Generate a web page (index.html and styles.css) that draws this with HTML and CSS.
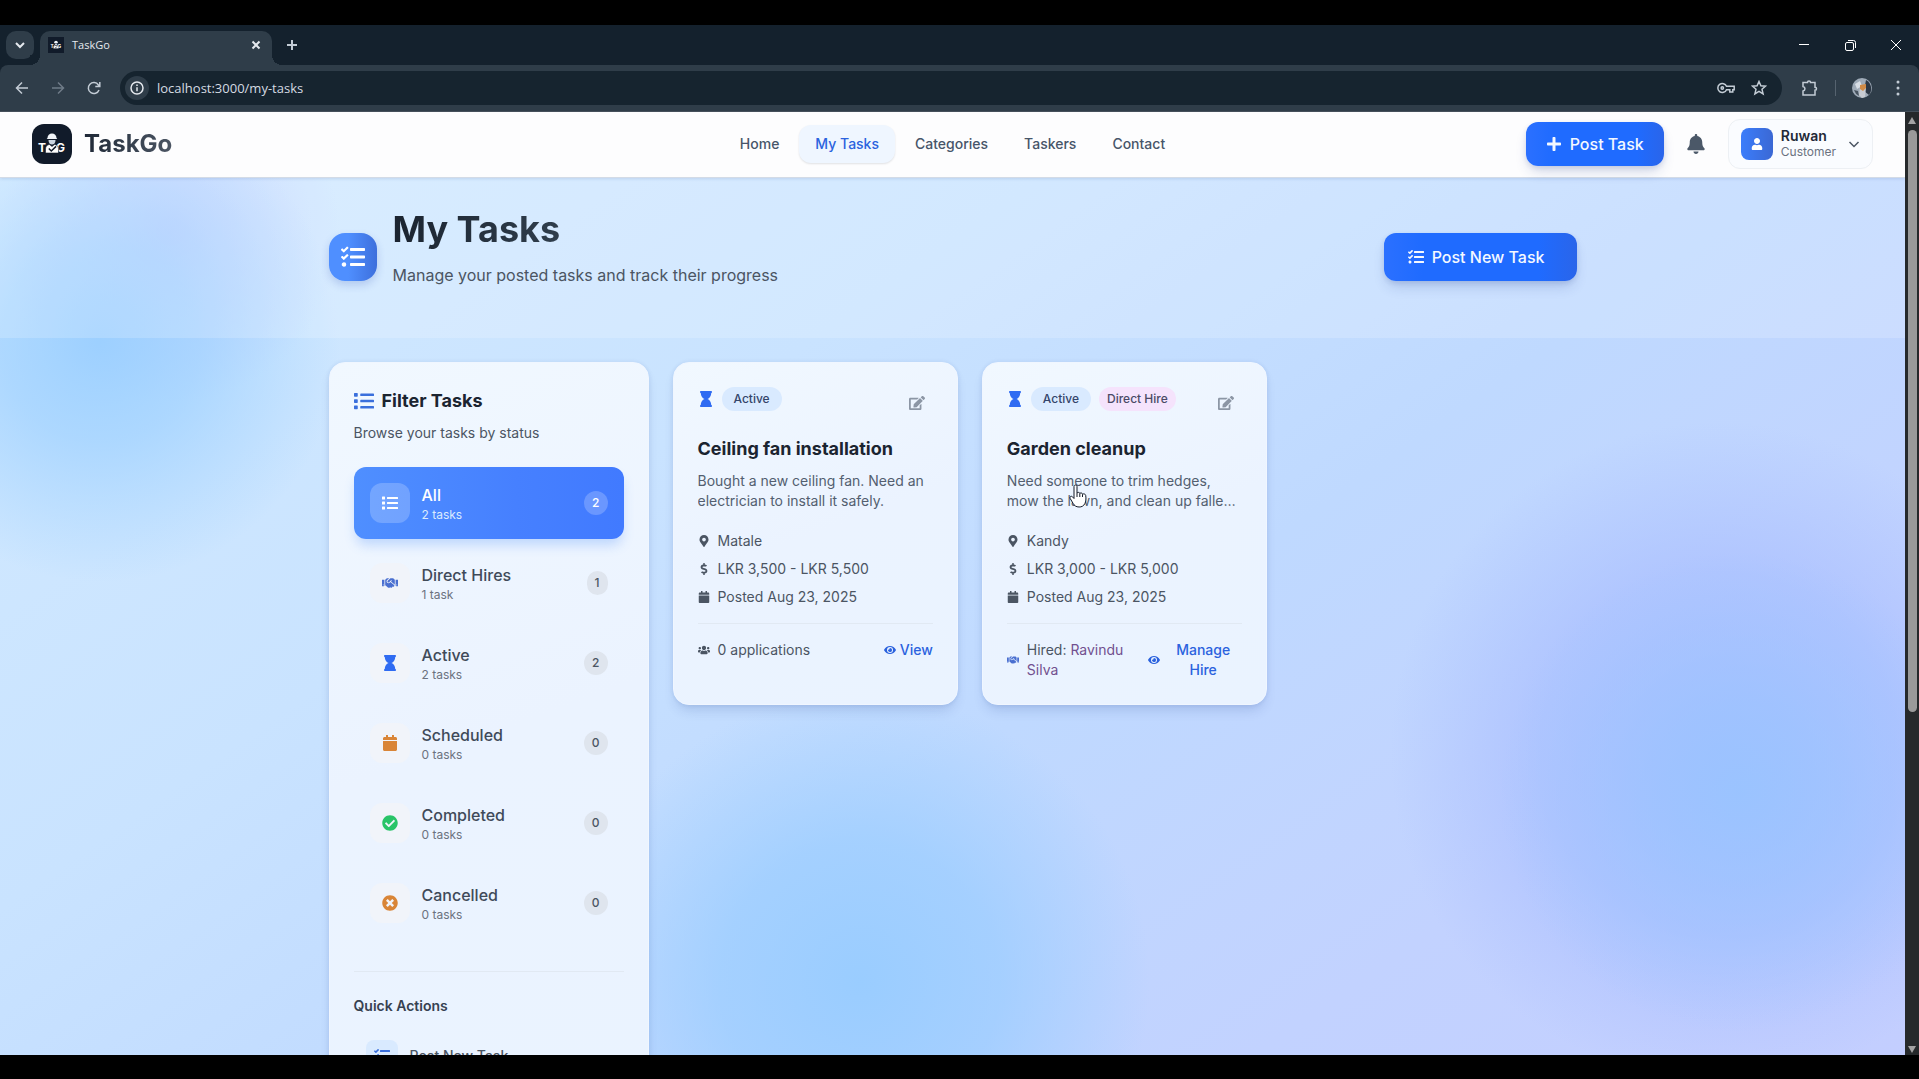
FILE: index.html
```html
<!DOCTYPE html>
<html lang="en">
<head>
<meta charset="utf-8">
<meta name="viewport" content="width=device-width, initial-scale=1">
<title>TaskGo</title>
<link rel="stylesheet" href="styles.css">
</head>
<body>
<svg class="sprite" aria-hidden="true">
  <symbol id="tasks" viewBox="0 0 512 512"><path d="M139.61 35.5a12 12 0 0 0-17 0L58.93 98.81l-22.7-22.12a12 12 0 0 0-17 0L3.53 92.41a12 12 0 0 0 0 17l47.59 47.4a12.78 12.78 0 0 0 17.61 0l15.59-15.62L156.52 69a12.09 12.09 0 0 0 .09-17zm0 159.19a12 12 0 0 0-17 0l-63.68 63.72-22.7-22.1a12 12 0 0 0-17 0L3.53 252a12 12 0 0 0 0 17L51 316.5a12.77 12.77 0 0 0 17.6 0l15.7-15.69 72.2-72.22a12 12 0 0 0 .09-16.9zM64 368c-26.49 0-48.59 21.5-48.59 48S37.53 464 64 464a48 48 0 0 0 0-96zm432 16H208a16 16 0 0 0-16 16v32a16 16 0 0 0 16 16h288a16 16 0 0 0 16-16v-32a16 16 0 0 0-16-16zm0-320H208a16 16 0 0 0-16 16v32a16 16 0 0 0 16 16h288a16 16 0 0 0 16-16V80a16 16 0 0 0-16-16zm0 160H208a16 16 0 0 0-16 16v32a16 16 0 0 0 16 16h288a16 16 0 0 0 16-16v-32a16 16 0 0 0-16-16z"/></symbol>
  <symbol id="list" viewBox="0 0 512 512"><path d="M80 368H16a16 16 0 0 0-16 16v64a16 16 0 0 0 16 16h64a16 16 0 0 0 16-16v-64a16 16 0 0 0-16-16zm0-320H16A16 16 0 0 0 0 64v64a16 16 0 0 0 16 16h64a16 16 0 0 0 16-16V64a16 16 0 0 0-16-16zm0 160H16a16 16 0 0 0-16 16v64a16 16 0 0 0 16 16h64a16 16 0 0 0 16-16v-64a16 16 0 0 0-16-16zm416 176H176a16 16 0 0 0-16 16v32a16 16 0 0 0 16 16h320a16 16 0 0 0 16-16v-32a16 16 0 0 0-16-16zm0-320H176a16 16 0 0 0-16 16v32a16 16 0 0 0 16 16h320a16 16 0 0 0 16-16V80a16 16 0 0 0-16-16zm0 160H176a16 16 0 0 0-16 16v32a16 16 0 0 0 16 16h320a16 16 0 0 0 16-16v-32a16 16 0 0 0-16-16z"/></symbol>
  <symbol id="hourglass" viewBox="0 0 384 512"><path d="M360 64c13.255 0 24-10.745 24-24V24c0-13.255-10.745-24-24-24H24C10.745 0 0 10.745 0 24v16c0 13.255 10.745 24 24 24 0 90.965 51.016 167.734 120.842 192C75.016 280.266 24 357.035 24 448c-13.255 0-24 10.745-24 24v16c0 13.255 10.745 24 24 24h336c13.255 0 24-10.745 24-24v-16c0-13.255-10.745-24-24-24 0-90.965-51.016-167.734-120.842-192C308.984 231.734 360 154.965 360 64z"/></symbol>
  <symbol id="calendar" viewBox="0 0 448 512"><path d="M12 192h424c6.6 0 12 5.4 12 12v260c0 26.5-21.5 48-48 48H48c-26.5 0-48-21.5-48-48V204c0-6.6 5.4-12 12-12zm436-44v-36c0-26.5-21.5-48-48-48h-48V12c0-6.6-5.4-12-12-12h-40c-6.6 0-12 5.4-12 12v52H160V12c0-6.6-5.4-12-12-12h-40c-6.6 0-12 5.4-12 12v52H48C21.5 64 0 85.5 0 112v36c0 6.6 5.4 12 12 12h424c6.6 0 12-5.4 12-12z"/></symbol>
  <symbol id="check" viewBox="0 0 512 512"><path d="M504 256c0 136.967-111.033 248-248 248S8 392.967 8 256 119.033 8 256 8s248 111.033 248 248zM227.314 387.314l184-184c6.248-6.248 6.248-16.379 0-22.627l-22.627-22.627c-6.248-6.249-16.379-6.249-22.628 0L216 308.118l-70.059-70.059c-6.248-6.248-16.379-6.248-22.628 0l-22.627 22.627c-6.248 6.248-6.248 16.379 0 22.627l104 104c6.249 6.249 16.379 6.249 22.628.001z"/></symbol>
  <symbol id="times" viewBox="0 0 512 512"><path d="M256 8C119 8 8 119 8 256s111 248 248 248 248-111 248-248S393 8 256 8zm121.6 313.1c4.7 4.7 4.7 12.3 0 17L338 377.6c-4.7 4.7-12.3 4.7-17 0L256 312l-65.1 65.6c-4.7 4.7-12.3 4.7-17 0L134.4 338c-4.7-4.7-4.7-12.3 0-17l65.6-65-65.6-65.1c-4.7-4.7-4.7-12.3 0-17l39.6-39.6c4.7-4.7 12.3-4.7 17 0l65 65.7 65.1-65.6c4.7-4.7 12.3-4.7 17 0l39.6 39.6c4.7 4.7 4.7 12.3 0 17L312 256l65.6 65.1z"/></symbol>
  <symbol id="edit" viewBox="0 0 576 512"><path d="M402.6 83.2l90.2 90.2c3.8 3.8 3.8 10 0 13.8L274.4 405.6l-92.8 10.3c-12.4 1.4-22.9-9.1-21.5-21.5l10.3-92.8L388.8 83.2c3.8-3.8 10-3.8 13.8 0zm162-22.9l-48.8-48.8c-15.2-15.2-39.9-15.2-55.2 0l-35.4 35.4c-3.8 3.8-3.8 10 0 13.8l90.2 90.2c3.8 3.8 10 3.8 13.8 0l35.4-35.4c15.2-15.3 15.2-40 0-55.2zM384 346.2V448H64V128h229.8c3.2 0 6.2-1.3 8.5-3.5l40-40c7.6-7.6 2.2-20.5-8.5-20.5H48C21.5 64 0 85.5 0 112v352c0 26.5 21.5 48 48 48h352c26.5 0 48-21.5 48-48V306.2c0-10.7-12.9-16-20.5-8.5l-40 40c-2.2 2.3-3.5 5.3-3.5 8.5z"/></symbol>
  <symbol id="pin" viewBox="0 0 384 512"><path d="M172.268 501.67C26.97 291.031 0 269.413 0 192 0 85.961 85.961 0 192 0s192 85.961 192 192c0 77.413-26.97 99.031-172.268 309.67-9.535 13.774-29.93 13.773-39.464 0zM192 272c44.183 0 80-35.817 80-80s-35.817-80-80-80-80 35.817-80 80 35.817 80 80 80z"/></symbol>
  <symbol id="dollar" viewBox="0 0 288 512"><path d="M209.2 233.4l-108-31.6C88.7 198.2 80 186.5 80 173.5c0-16.3 13.2-29.5 29.5-29.5h66.3c12.2 0 24.2 3.7 34.2 10.5 6.1 4.1 14.3 3.1 19.5-2l34.8-34c7.1-6.9 6.1-18.4-1.8-24.5C238 74.8 207.4 64.1 176 64V16c0-8.8-7.2-16-16-16h-32c-8.8 0-16 7.2-16 16v48h-2.5C45.8 64-5.4 118.7.5 183.6c4.2 46.1 39.4 83.6 83.8 96.6l102.5 30c12.5 3.7 21.2 15.3 21.2 28.3 0 16.3-13.2 29.5-29.5 29.5h-66.3C100 368 88 364.3 78 357.5c-6.1-4.1-14.3-3.1-19.5 2l-34.8 34c-7.1 6.9-6.1 18.4 1.8 24.5 24.5 19.2 55.1 29.9 86.5 30v48c0 8.8 7.2 16 16 16h32c8.8 0 16-7.2 16-16v-48.2c46.6-.9 90.3-28.6 105.7-72.7 21.5-61.6-14.6-124.8-72.5-141.7z"/></symbol>
  <symbol id="users" viewBox="0 0 640 512"><path d="M96 224c35.3 0 64-28.7 64-64s-28.7-64-64-64-64 28.7-64 64 28.7 64 64 64zm448 0c35.3 0 64-28.7 64-64s-28.7-64-64-64-64 28.7-64 64 28.7 64 64 64zm32 32h-64c-17.6 0-33.5 7.1-45.1 18.6 40.3 22.1 68.9 62 75.1 109.4h66c17.7 0 32-14.3 32-32v-32c0-35.3-28.7-64-64-64zm-256 0c61.9 0 112-50.1 112-112S381.9 32 320 32 208 82.1 208 144s50.1 112 112 112zm76.8 32h-8.3c-20.8 10-43.9 16-68.5 16s-47.6-6-68.5-16h-8.3C179.6 288 128 339.6 128 403.2V432c0 26.5 21.5 48 48 48h288c26.5 0 48-21.5 48-48v-28.8c0-63.6-51.6-115.2-115.2-115.2zm-223.7-13.4C161.5 263.1 145.6 256 128 256H64c-35.3 0-64 28.7-64 64v32c0 17.7 14.3 32 32 32h65.9c6.3-47.4 34.9-87.3 75.2-109.4z"/></symbol>
  <symbol id="eye" viewBox="0 0 576 512"><path d="M572.52 241.4C518.29 135.59 410.93 64 288 64S57.68 135.64 3.48 241.41a32.35 32.35 0 0 0 0 29.19C57.71 376.41 165.07 448 288 448s230.32-71.64 284.52-177.41a32.35 32.35 0 0 0 0-29.19zM288 400a144 144 0 1 1 144-144 143.93 143.93 0 0 1-144 144zm0-240a95.31 95.31 0 0 0-25.31 3.79 47.85 47.85 0 0 1-66.9 66.9A95.78 95.78 0 1 0 288 160z"/></symbol>
  <symbol id="handshake" viewBox="0 0 640 512"><path d="M434.7 64h-85.9c-8 0-15.7 3-21.6 8.4l-98.3 90c-.1.1-.2.3-.3.4-16.6 15.6-16.3 40.5-2.1 56 12.7 13.9 39.4 17.6 56.1 2.7.1-.1.3-.1.4-.2l79.9-73.2c6.5-5.9 16.7-5.5 22.6 1 6 6.5 5.5 16.6-1 22.6l-26.1 23.9L504 313.8c2.9 2.4 5.5 5 7.9 7.7V128l-54.6-54.6c-5.9-6-14.1-9.4-22.6-9.4zM544 128.2v223.9c0 17.7 14.3 32 32 32h64V128.2h-96zm48 223.9c-8.8 0-16-7.2-16-16s7.2-16 16-16 16 7.2 16 16-7.2 16-16 16zM0 384h64c17.7 0 32-14.3 32-32V128.2H0V384zm48-63.9c8.8 0 16 7.2 16 16s-7.2 16-16 16-16-7.2-16-16c0-8.9 7.2-16 16-16zm435.9 18.6L334.6 217.5l-30 27.5c-29.7 27.1-75.2 24.5-101.7-4.4-26.9-29.4-24.8-74.9 4.4-101.7L289.1 64h-83.8c-8.5 0-16.6 3.4-22.6 9.4L128 128v223.9h18.3l90.5 81.9c27.4 22.3 67.7 18.1 90-9.3l.2-.2 17.9 15.5c15.9 13 39.4 10.5 52.3-5.4l31.4-38.6 5.4 4.4c13.7 11.1 33.9 9.1 45-4.7l9.5-11.7c11.2-13.8 9.1-33.9-4.6-45.1z"/></symbol>
  <symbol id="plus" viewBox="0 0 448 512"><path d="M416 208H272V64c0-17.67-14.33-32-32-32h-32c-17.67 0-32 14.33-32 32v144H32c-17.67 0-32 14.33-32 32v32c0 17.67 14.33 32 32 32h144v144c0 17.67 14.33 32 32 32h32c17.67 0 32-14.33 32-32V304h144c17.67 0 32-14.33 32-32v-32c0-17.67-14.33-32-32-32z"/></symbol>
  <symbol id="bell" viewBox="0 0 448 512"><path d="M224 512c35.32 0 63.97-28.65 63.97-64H160.03c0 35.35 28.65 64 63.97 64zm215.39-149.71c-19.32-20.76-55.47-51.99-55.47-154.29 0-77.7-54.48-139.9-127.94-155.16V32c0-17.67-14.32-32-31.98-32s-31.98 14.33-31.98 32v20.84C118.56 68.1 64.08 130.3 64.08 208c0 102.3-36.15 133.53-55.47 154.29-6 6.45-8.66 14.16-8.61 21.71.11 16.4 12.98 32 32.1 32h383.8c19.12 0 32-15.6 32.1-32 .05-7.55-2.61-15.27-8.61-21.71z"/></symbol>
  <symbol id="user" viewBox="0 0 448 512"><path d="M224 256c70.7 0 128-57.3 128-128S294.7 0 224 0 96 57.3 96 128s57.3 128 128 128zm89.6 32h-16.7c-22.2 10.2-46.9 16-72.9 16s-50.6-5.8-72.9-16h-16.7C60.2 288 0 348.2 0 422.4V464c0 26.5 21.5 48 48 48h352c26.5 0 48-21.5 48-48v-41.6c0-74.2-60.2-134.4-134.4-134.4z"/></symbol>
  <symbol id="logo" viewBox="0 0 40 40">
    <rect width="40" height="40" fill="#111b2a"/>
    <text x="6" y="28" class="logo-letter">T</text>
    <text x="24" y="28" class="logo-letter">G</text>
    <path d="M15.500 14a4.500 4.500 0 0 1 9 0l.8 1H14.700z" fill="#f1f5f9"/>
    <path d="M16.500 16h7c0 3-1.500 4.500-3.500 4.500s-3.500-1.500-3.500-4.500z" fill="#cbd5e1"/>
    <path d="M13.500 29v-4c0-3 2-4.500 4-4.500l2.500 2 2.500-2c2 0 4 1.500 4 4.500v4z" fill="#fff" stroke="#111b2a" stroke-width=".6"/>
    <path d="M16.800 24.500l2.500 2.500 4.800-4.600" fill="none" stroke="#111b2a" stroke-width="1.500"/>
  </symbol>
</svg>

<div class="browser">
  <div class="tabstrip">
    <button class="tab-search" aria-label="Search tabs"><svg width="12" height="12" viewBox="0 0 12 12" class="line bold"><path d="M2 4l4 4 4-4"/></svg></button>
    <div class="tab">
      <svg class="favicon" width="16" height="16"><use href="#logo"/></svg>
      <span>TaskGo</span>
      <button class="plain tab-close" aria-label="Close tab"><svg width="10" height="10" viewBox="0 0 10 10" class="line bold"><path d="M1.500 1.500l7 7M8.500 1.500l-7 7"/></svg></button>
    </div>
    <button class="plain new-tab" aria-label="New tab"><svg width="12" height="12" viewBox="0 0 12 12" class="line bold"><path d="M6 1v10M1 6h10"/></svg></button>
    <div class="window-controls">
      <button class="plain" aria-label="Minimize"><svg width="10" height="10" viewBox="0 0 10 10" class="line"><path d="M0 4.500h10"/></svg></button>
      <button class="plain" aria-label="Restore"><svg width="11" height="11" viewBox="0 0 11 11" class="line"><rect x=".5" y="2.500" width="8" height="8" rx="1.500"/><path d="M3 .5h5.500a2 2 0 0 1 2 2V8"/></svg></button>
      <button class="plain" aria-label="Close"><svg width="10" height="10" viewBox="0 0 10 10" class="line"><path d="M0 0l10 10M10 0L0 10"/></svg></button>
    </div>
  </div>

  <div class="toolbar">
    <div class="history">
      <button class="plain" aria-label="Back"><svg width="14" height="14" viewBox="0 0 14 14" class="line mid"><path d="M13 7H2M7 1.500L1.500 7 7 12.500"/></svg></button>
      <button class="plain dim" aria-label="Forward"><svg width="14" height="14" viewBox="0 0 14 14" class="line mid"><path d="M1 7h11M7 1.500L12.500 7 7 12.500"/></svg></button>
      <button class="plain" aria-label="Reload"><svg width="14" height="14" viewBox="0 0 14 14" class="line mid"><path d="M12 9a5.500 5.500 0 1 1-.6-5L12.500 5.200M12.800 1v4.500H8.300"/></svg></button>
    </div>
    <div class="omnibox">
      <button class="site-info" aria-label="Site information"><svg width="14" height="14" viewBox="0 0 14 14" class="line mid"><circle cx="7" cy="7" r="6"/><path d="M7 6.200v4M7 3.500v1.500"/></svg></button>
      <input class="url" type="text" value="localhost:3000/my-tasks" aria-label="Address">
      <button class="plain" aria-label="Passwords"><svg width="18" height="12" viewBox="0 0 18 12" class="line mid"><path d="M9.500 4.300h7.700v3.400h-1.400v2.200h-3V7.700H9.500a4.500 4.500 0 1 1 0-3.400z"/><circle cx="5.300" cy="6" r="1.200"/></svg></button>
      <button class="plain" aria-label="Bookmark"><svg width="16" height="16" viewBox="0 0 16 16" class="line mid"><path d="M8 1.500l1.900 4.300 4.600.4-3.500 3.100 1.100 4.600L8 11.400l-4.100 2.500L5 9.300 1.500 6.200l4.600-.4z"/></svg></button>
    </div>
    <div class="extras">
      <button class="plain" aria-label="Extensions"><svg width="18" height="18" viewBox="0 0 18 18" class="line mid"><path d="M2 3.500h4.500a1.500 1.500 0 0 1 3 0h4.500v4.700a1.500 1.500 0 0 1 0 3V16H2v-4c2.600-.6 2.600-3.800 0-4.400z"/></svg></button>
      <span class="rule"></span>
      <button class="plain" aria-label="Profile"><svg width="20" height="20" viewBox="0 0 20 20"><circle cx="10" cy="10" r="10" fill="#9fabb8"/><path d="M14 2a10 10 0 0 1 3 15l-5-4z" fill="#2c3744"/><path d="M3 6l5-3 2 5-5 3z" fill="#d8dee6"/><path d="M7 17l1-8 3-2 3 3-1 9-3 1z" fill="#c9ccd2"/><path d="M8 7l6-1v4l-3 3-3-2z" fill="#d08a45"/><path d="M2 12l4 1 1 5a10 10 0 0 1-5-6z" fill="#47535f"/></svg></button>
      <button class="plain" aria-label="Menu"><svg width="4" height="16" viewBox="0 0 4 16" fill="currentColor"><circle cx="2" cy="2" r="1.500"/><circle cx="2" cy="8" r="1.500"/><circle cx="2" cy="14" r="1.500"/></svg></button>
    </div>
  </div>

  <div class="viewport">
    <div class="page">
      <header class="site-header">
        <a class="brand" href="#"><svg class="brand-logo" width="40" height="40"><use href="#logo"/></svg><span class="brand-name">TaskGo</span></a>
        <nav class="site-nav" aria-label="Main">
          <a href="#">Home</a>
          <a href="#" class="current">My Tasks</a>
          <a href="#">Categories</a>
          <a href="#">Taskers</a>
          <a href="#">Contact</a>
        </nav>
        <div class="account">
          <button class="primary post"><svg class="icon" width="16" height="16"><use href="#plus"/></svg>Post Task</button>
          <button class="bell" aria-label="Notifications"><svg class="icon" width="20" height="20"><use href="#bell"/></svg></button>
          <button class="profile">
            <span class="avatar"><svg class="icon" width="12" height="12"><use href="#user"/></svg></span>
            <span class="who"><span class="who-name">Ruwan</span><span class="who-role">Customer</span></span>
            <svg width="12" height="12" viewBox="0 0 12 12" class="line mid"><path d="M1.500 4L6 8.500 10.500 4"/></svg>
          </button>
        </div>
      </header>

      <section class="hero">
        <div class="container hero-row">
          <span class="hero-icon"><svg class="icon" width="24" height="24"><use href="#tasks"/></svg></span>
          <div class="hero-text">
            <h1>My Tasks</h1>
            <p>Manage your posted tasks and track their progress</p>
          </div>
          <button class="primary post-new"><svg class="icon" width="16" height="16"><use href="#tasks"/></svg>Post New Task</button>
        </div>
      </section>

      <main class="container content">
        <aside class="panel sidebar">
          <h2><svg class="icon" width="20" height="20"><use href="#list"/></svg>Filter Tasks</h2>
          <p class="hint">Browse your tasks by status</p>
          <div class="filters">
            <button class="filter selected"><span class="tile"><svg class="icon" width="16" height="16"><use href="#list"/></svg></span><span class="label"><span class="name">All</span><span class="sub">2 tasks</span></span><span class="count">2</span></button>
            <button class="filter"><span class="tile hire"><svg class="icon" width="16" height="16"><use href="#handshake"/></svg></span><span class="label"><span class="name">Direct Hires</span><span class="sub">1 task</span></span><span class="count">1</span></button>
            <button class="filter"><span class="tile blue"><svg class="icon" width="16" height="16"><use href="#hourglass"/></svg></span><span class="label"><span class="name">Active</span><span class="sub">2 tasks</span></span><span class="count">2</span></button>
            <button class="filter"><span class="tile orange"><svg class="icon" width="16" height="16"><use href="#calendar"/></svg></span><span class="label"><span class="name">Scheduled</span><span class="sub">0 tasks</span></span><span class="count">0</span></button>
            <button class="filter"><span class="tile green"><svg class="icon" width="16" height="16"><use href="#check"/></svg></span><span class="label"><span class="name">Completed</span><span class="sub">0 tasks</span></span><span class="count">0</span></button>
            <button class="filter"><span class="tile orange"><svg class="icon" width="16" height="16"><use href="#times"/></svg></span><span class="label"><span class="name">Cancelled</span><span class="sub">0 tasks</span></span><span class="count">0</span></button>
          </div>
          <div class="quick">
            <h3>Quick Actions</h3>
            <button class="quick-action"><span class="quick-tile"><svg class="icon" width="16" height="16"><use href="#tasks"/></svg></span>Post New Task</button>
          </div>
        </aside>

        <div class="cards">
          <article class="panel card">
            <div class="card-top">
              <svg class="icon blue" width="16" height="16"><use href="#hourglass"/></svg>
              <span class="pill">Active</span>
              <button class="edit" aria-label="Edit task"><svg class="icon" width="16" height="16"><use href="#edit"/></svg></button>
            </div>
            <h2>Ceiling fan installation</h2>
            <p class="desc">Bought a new ceiling fan. Need an electrician to install it safely.</p>
            <ul class="meta">
              <li><svg class="icon" width="12" height="12"><use href="#pin"/></svg>Matale</li>
              <li><svg class="icon" width="12" height="12"><use href="#dollar"/></svg>LKR 3,500 - LKR 5,500</li>
              <li><svg class="icon" width="12" height="12"><use href="#calendar"/></svg>Posted Aug 23, 2025</li>
            </ul>
            <div class="card-foot">
              <div class="applicants"><svg class="icon" width="12" height="12"><use href="#users"/></svg><span>0 applications</span></div>
              <a class="view" href="#"><svg class="icon" width="12" height="12"><use href="#eye"/></svg><span>View</span></a>
            </div>
          </article>

          <article class="panel card">
            <div class="card-top">
              <svg class="icon blue" width="16" height="16"><use href="#hourglass"/></svg>
              <span class="pill">Active</span>
              <span class="pill direct">Direct Hire</span>
              <button class="edit" aria-label="Edit task"><svg class="icon" width="16" height="16"><use href="#edit"/></svg></button>
            </div>
            <h2>Garden cleanup</h2>
            <p class="desc">Need someone to trim hedges, mow the lawn, and clean up fallen leaves around the garden.</p>
            <ul class="meta">
              <li><svg class="icon" width="12" height="12"><use href="#pin"/></svg>Kandy</li>
              <li><svg class="icon" width="12" height="12"><use href="#dollar"/></svg>LKR 3,000 - LKR 5,000</li>
              <li><svg class="icon" width="12" height="12"><use href="#calendar"/></svg>Posted Aug 23, 2025</li>
            </ul>
            <div class="card-foot">
              <div class="applicants"><svg class="icon hire" width="12" height="12"><use href="#handshake"/></svg><span>Hired: <span class="hired">Ravindu Silva</span></span></div>
              <a class="view" href="#"><svg class="icon" width="12" height="12"><use href="#eye"/></svg><span>Manage Hire</span></a>
            </div>
            <svg class="pointer" width="18" height="24" viewBox="0 0 18 24" aria-hidden="true"><path d="M5 2.500C5 .5 8 .5 8 2.500V9c.8-1 2.600-.8 2.800.4.900-.8 2.500-.5 2.700.8 1-.7 2.900-.3 3.200 1.200.5 3.600.3 6-.9 8.300-1.300 2.500-3.300 3.300-5.700 3.300-3 0-4.800-1.400-6-3.600L1.200 14.500c-.9-1.600 1-3 2.300-1.700L5 14.500z" fill="#fff" stroke="#111827" stroke-width="1"/><path d="M8 9v4M10.800 9.500V13M13.500 10.300V13" stroke="#111827" fill="none"/></svg>
          </article>
        </div>
      </main>
    </div>

    <div class="scrollbar" aria-hidden="true">
      <span class="arrow up"></span>
      <span class="track"><span class="thumb"></span></span>
      <span class="arrow down"></span>
    </div>
  </div>
</div>
</body>
</html>
```
FILE: styles.css
```css
* { box-sizing: border-box; }

body {
  margin: 0;
  padding: 25px 0 24px;
  height: 100vh;
  background: #000;
  font-family: Inter, "Liberation Sans", sans-serif;
  font-size: 14px;
  line-height: 20px;
  color: #4b5563;
}

h1, h2, h3, p, ul { margin: 0; padding: 0; }
a { color: inherit; text-decoration: none; }
button {
  font: inherit;
  color: inherit;
  border: 0;
  padding: 0;
  background: none;
  cursor: pointer;
}
svg { display: block; flex: none; }
.sprite { position: absolute; width: 0; height: 0; }
.icon { fill: currentColor; }
.line { fill: none; stroke: currentColor; stroke-width: 1; }
.line.mid { stroke-width: 1.5; }
.line.bold { stroke-width: 2; }
.logo-letter { font: 700 12px Inter, sans-serif; fill: #fff; }

/* Browser frame */
.browser {
  display: flex;
  flex-direction: column;
  height: 100%;
  overflow: hidden;
  background: #14212d;
}
.tabstrip {
  display: flex;
  align-items: center;
  height: 40px;
  flex: none;
  padding-left: 6px;
  color: #e5e9ee;
  font: 11px/16px "Open Sans", "Noto Sans", sans-serif;
}
.plain { display: grid; place-items: center; flex: none; }
.tab-search {
  display: grid;
  place-items: center;
  width: 28px;
  height: 28px;
  border-radius: 10px;
  background: #2f3d49;
}
.tab {
  position: relative;
  align-self: flex-end;
  display: flex;
  align-items: center;
  gap: 8px;
  width: 232px;
  height: 34px;
  margin-left: 6px;
  padding: 0 8px 6px;
  border-radius: 10px 10px 0 0;
  background: #2f3d49;
}
.tab::before, .tab::after {
  content: "";
  position: absolute;
  bottom: 0;
  width: 10px;
  height: 10px;
}
.tab::before { left: -10px; background: radial-gradient(circle at 0 0, #14212d 10px, #2f3d49 10px); }
.tab::after { right: -10px; background: radial-gradient(circle at 100% 0, #14212d 10px, #2f3d49 10px); }
.tab-close { width: 16px; height: 16px; margin-left: auto; }
.new-tab { width: 28px; height: 28px; margin-left: 6px; color: #c3ccd5; }
.window-controls { display: flex; margin-left: auto; color: #fff; }
.window-controls .plain { width: 46px; height: 40px; }

.toolbar {
  display: flex;
  align-items: center;
  flex: none;
  height: 47px;
  border-radius: 8px 8px 0 0;
  border-bottom: 1px solid #45505b;
  background: #2f3d49;
  color: #c3ccd5;
}
.history { display: flex; gap: 8px; padding: 0 12px 0 8px; }
.history .plain { width: 28px; height: 28px; }
.dim { color: #6f7c88; }
.omnibox {
  display: flex;
  align-items: center;
  flex: 1;
  gap: 16px;
  height: 34px;
  padding: 0 15px 0 5px;
  border-radius: 17px;
  background: #16242f;
}
.site-info {
  display: grid;
  place-items: center;
  flex: none;
  width: 24px;
  height: 24px;
  border-radius: 12px;
  background: #2f3d49;
  color: #e5e9ee;
}
.url {
  flex: 1;
  min-width: 0;
  margin-left: -8px;
  padding: 0;
  border: 0;
  background: none;
  color: #d5dbe2;
  font: 13px/20px "Open Sans", "Noto Sans", sans-serif;
}
.extras { display: flex; align-items: center; gap: 16px; padding: 0 19px; }
.extras .plain:last-child { margin-left: 8px; }
.rule { width: 1px; height: 16px; background: #56636f; }

.viewport { display: flex; flex: 1; min-height: 0; }
.scrollbar {
  display: flex;
  flex-direction: column;
  align-items: center;
  width: 14px;
  padding: 5px 0 2px;
  background: #26292b;
}
.arrow { border: 4px solid transparent; }
.up { border-bottom: 7px solid #a3a3a3; border-top: 0; }
.down { border-top: 7px solid #a3a3a3; border-bottom: 0; }
.track { flex: 1; padding: 6px 0; }
.thumb { display: block; width: 9px; height: 64%; border-radius: 5px; background: #9a9a9a; }

/* Page */
.page {
  flex: 1;
  min-width: 0;
  overflow: hidden;
  background:
    radial-gradient(circle at 1740px 680px, #98c4ffdd 0, #98c4ff99 90px, #98c4ff00 240px),
    radial-gradient(circle at 1720px 640px, #9db4ffaa 0, #9db4ff77 180px, #9db4ff00 330px),
    radial-gradient(circle at 860px 870px, #97ccffee 0, #97ccffaa 140px, #97ccff00 290px),
    radial-gradient(circle at 100px 230px, #96cdffdd 0, #96cdff99 100px, #96cdff00 240px),
    radial-gradient(circle at 170px 120px, #b3c2ffaa 0, #b3c2ff00 170px),
    linear-gradient(145deg, #d4ebff 0%, #c9e3ff 35%, #bfd9ff 58%, #c2d2ff 80%, #c3ceff 100%);
}
.container { width: 100%; max-width: 1280px; margin: 0 auto; padding: 0 16px; }

.site-header {
  position: relative;
  display: grid;
  grid-template-columns: 1fr auto 1fr;
  align-items: center;
  height: 66px;
  padding: 0 32px 2px;
  border-bottom: 1px solid #d3dbe6;
  background: #fdfdfe;
  box-shadow: 0 1px 3px #1e3a8a22;
}
.brand { display: flex; align-items: center; gap: 12px; }
.brand-logo { border-radius: 12px; }
.brand-name {
  font-size: 24px;
  font-weight: 700;
  line-height: 32px;
  color: transparent;
  background: linear-gradient(90deg, #1f2937, #4b5563);
  background-clip: text;
}
.site-nav { display: flex; gap: 4px; font-weight: 500; color: #475569; }
.site-nav a { padding: 9px 16px; border-radius: 12px; }
.site-nav .current { background: #eff6ff; color: #2b62de; box-shadow: 0 1px 2px #0f172a1f; }
.account { display: flex; align-items: center; justify-content: flex-end; }
.primary {
  display: flex;
  align-items: center;
  gap: 8px;
  border-radius: 12px;
  background: linear-gradient(90deg, #2b70ff, #1f6bff 20%, #1f6bff 80%, #2a65ea);
  color: #f4f8ff;
  font-size: 16px;
  font-weight: 500;
  line-height: 24px;
  box-shadow: 0 8px 14px -3px #1e3a8a33, 0 2px 5px #1e3a8a1f;
}
.post { padding: 10px 20px; }
.bell { margin: 0 22px 0 22px; color: #4b5868; }
.profile {
  display: flex;
  align-items: center;
  gap: 8px;
  height: 50px;
  padding: 0 12px;
  border: 1px solid #edf0f4;
  border-radius: 12px;
  background: #fafcff;
  text-align: left;
  color: #4b5563;
}
.avatar {
  display: grid;
  place-items: center;
  width: 32px;
  height: 32px;
  border-radius: 8px;
  background: linear-gradient(90deg, #3b7dfb, #3b68d4);
  color: #fff;
}
.who { display: grid; margin-right: 4px; }
.who-name { font-weight: 600; line-height: 16px; color: #1f2937; }
.who-role { font-size: 12px; line-height: 16px; color: #6b7280; }

.hero { padding: 31px 0 33px; background: #ffffff2e; }
.hero-row { display: flex; align-items: center; gap: 16px; }
.hero-icon {
  display: grid;
  place-items: center;
  width: 48px;
  height: 48px;
  border-radius: 16px;
  background: linear-gradient(90deg, #4f8fff 40%, #3d6fdc);
  color: #fff;
  box-shadow: 0 4px 8px #1e40af33;
}
.hero-text { flex: 1; }
.hero h1 {
  margin-bottom: 12px;
  font-size: 36px;
  line-height: 40px;
  color: transparent;
  background: linear-gradient(90deg, #1b2430, #2f3d4b 160px);
  background-clip: text;
}
.hero p { margin-bottom: 16px; font-size: 16px; line-height: 28px; }
.post-new { padding: 12px 32px 12px 24px; }

.content { display: grid; grid-template-columns: 320px 1fr; gap: 24px; align-items: start; padding-top: 24px; }
.panel {
  padding: 24px;
  border: 1px solid #f0f6ff;
  border-radius: 16px;
  background: linear-gradient(160deg, #f1f8ff, #ebf3ff 50%, #eaf3ff);
  box-shadow: 0 8px 12px -3px #1e3a8a2b, 0 0 4px #1e3a8a1a;
}
.panel h2 { font-size: 18px; font-weight: 700; line-height: 28px; color: #1b2430; }
.blue { color: #2f6bf2; }
.green { color: #29c468; }
.orange { color: #d98537; }
.hire { color: #4a6fd0; }

.sidebar h2 { display: flex; align-items: center; gap: 8px; }
.sidebar h2 .icon { color: #3a6fdc; }
.hint { margin: 8px 0 24px; }
.filters { display: grid; gap: 8px; }
.filter {
  display: flex;
  align-items: center;
  gap: 12px;
  padding: 16px;
  border-radius: 12px;
  text-align: left;
}
.tile {
  display: grid;
  place-items: center;
  width: 40px;
  height: 40px;
  border-radius: 12px;
  background: #f1f4fa;
}
.label { display: grid; flex: 1; }
.name { font-size: 16px; font-weight: 500; line-height: 24px; color: #3f4a59; }
.sub { font-size: 12px; line-height: 16px; color: #6b7280; }
.count {
  padding: 4px 8px;
  border-radius: 12px;
  background: #dfe5ee;
  font-size: 12px;
  font-weight: 500;
  line-height: 16px;
}
.selected {
  background: linear-gradient(90deg, #4f8fff, #4680ff 60%, #417aff);
  box-shadow: 0 8px 12px -2px #3b82f644;
}
.selected .tile { background: #ffffff36; color: #fff; }
.selected .name { color: #fff; }
.selected .sub { color: #dbeafe; }
.selected .count { background: #ffffff36; color: #fff; }

.quick { margin-top: 32px; padding-top: 24px; border-top: 1px solid #e1e9f3; }
.quick h3 { margin-bottom: 12px; font-size: 14px; font-weight: 600; color: #374151; }
.quick-action { display: flex; align-items: center; gap: 12px; width: 100%; padding: 12px; font-weight: 500; }
.quick-tile {
  display: grid;
  place-items: center;
  width: 32px;
  height: 32px;
  border-radius: 8px;
  background: #d9eaff;
  color: #3a6fdc;
}

.cards { display: grid; grid-template-columns: repeat(3, 1fr); gap: 24px; }
.card { position: relative; }
.card-top { display: flex; gap: 8px; }
.card-top > .icon { margin-top: 4px; }
.pill {
  align-self: flex-start;
  padding: 4px 12px;
  border-radius: 12px;
  background: #d9eaff;
  font-size: 12px;
  font-weight: 500;
  line-height: 16px;
  color: #34456a;
}
.direct { padding: 4px 8px; background: #f5e3fc; color: #4a4a66; }
.edit { margin-left: auto; padding: 8px; color: #8c96a5; }
.card h2 { margin: 16px 0 8px; }
.desc {
  display: -webkit-box;
  -webkit-box-orient: vertical;
  -webkit-line-clamp: 2;
  overflow: hidden;
  color: #535f70;
}
.meta { display: grid; gap: 8px; margin-top: 20px; list-style: none; }
.meta li, .applicants { display: flex; align-items: center; gap: 8px; }
.card-foot {
  display: flex;
  justify-content: space-between;
  margin-top: 16px;
  padding-top: 16px;
  border-top: 1px solid #e1e9f3;
}
.view { display: flex; align-items: center; gap: 4px; font-weight: 500; text-align: center; color: #2b62de; }
.hired { color: #72508f; }
.pointer { position: absolute; left: 86px; top: 121px; }
```
